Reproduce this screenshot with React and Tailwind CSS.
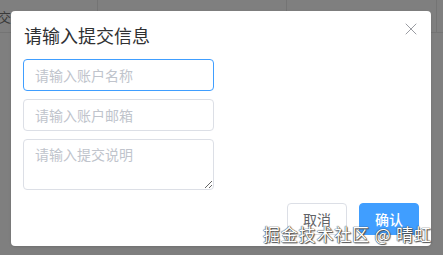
import { X } from 'lucide-react';

export default function App() {
    return (
        <div className="relative w-[443px] h-[255px] overflow-hidden bg-[#7f7f7f]" style={{ fontFamily: '"Noto Sans CJK SC", "Liberation Sans", sans-serif' }}>
            {/* page behind the overlay */}
            <div className="flex h-[33px] -ml-[15px] border-b border-[#747474] text-[13px] text-[#3a3a3a]">
                <div className="w-[113px] border-r border-[#747474] pt-[8px] leading-[18px]">提交信息</div>
                <div className="w-[189px] border-r border-[#747474]"></div>
                <div className="w-[150px] border-r border-[#747474]"></div>
            </div>

            {/* dialog */}
            <div className="absolute left-[11px] top-[11px] w-[420px] bg-white rounded-[4px] px-[12px] pt-[12px] pb-[11px] shadow">
                <div className="h-[24px]">
                    <span className="text-[18px] leading-[24px] text-[#303133] pl-[1px]">请输入提交信息</span>
                </div>
                <button className="absolute left-[390px] top-[8px] text-[#909399]">
                    <X className="w-[20px] h-[20px]" strokeWidth={1.1} />
                </button>

                <div className="mt-[12px] flex flex-col gap-[8px] w-[191px]">
                    <input className="h-[32px] px-[11px] text-[14px] border border-[#409eff] rounded-[4px] outline-none placeholder:text-[#c0c4cc]" placeholder="请输入账户名称" />
                    <input className="h-[32px] px-[11px] text-[14px] border border-[#dcdfe6] rounded-[4px] outline-none placeholder:text-[#c0c4cc]" placeholder="请输入账户邮箱" />
                    <textarea className="h-[51px] px-[11px] py-[4px] text-[14px] leading-[21px] border border-[#dcdfe6] rounded-[4px] outline-none resize-y placeholder:text-[#c0c4cc]" placeholder="请输入提交说明" />
                </div>

                <div className="mt-[13px] flex justify-end gap-[12px]">
                    <button className="w-[60px] h-[32px] text-[14px] text-[#606266] border border-[#dcdfe6] rounded-[4px] bg-white">取消</button>
                    <button className="w-[60px] h-[32px] text-[14px] font-medium text-white bg-[#409eff] border border-[#409eff] rounded-[4px]">确认</button>
                </div>
            </div>

            {/* watermark */}
            <div className="absolute left-[263px] top-[222px] text-[17px] leading-[24px] text-white tracking-[0.8px] whitespace-nowrap" style={{ textShadow: '0 0 1px #333, 0 0 1px #333, 1px 1px 1px #555' }}>
                掘金技术社区 @ 晴虹
            </div>
        </div>
    );
}
